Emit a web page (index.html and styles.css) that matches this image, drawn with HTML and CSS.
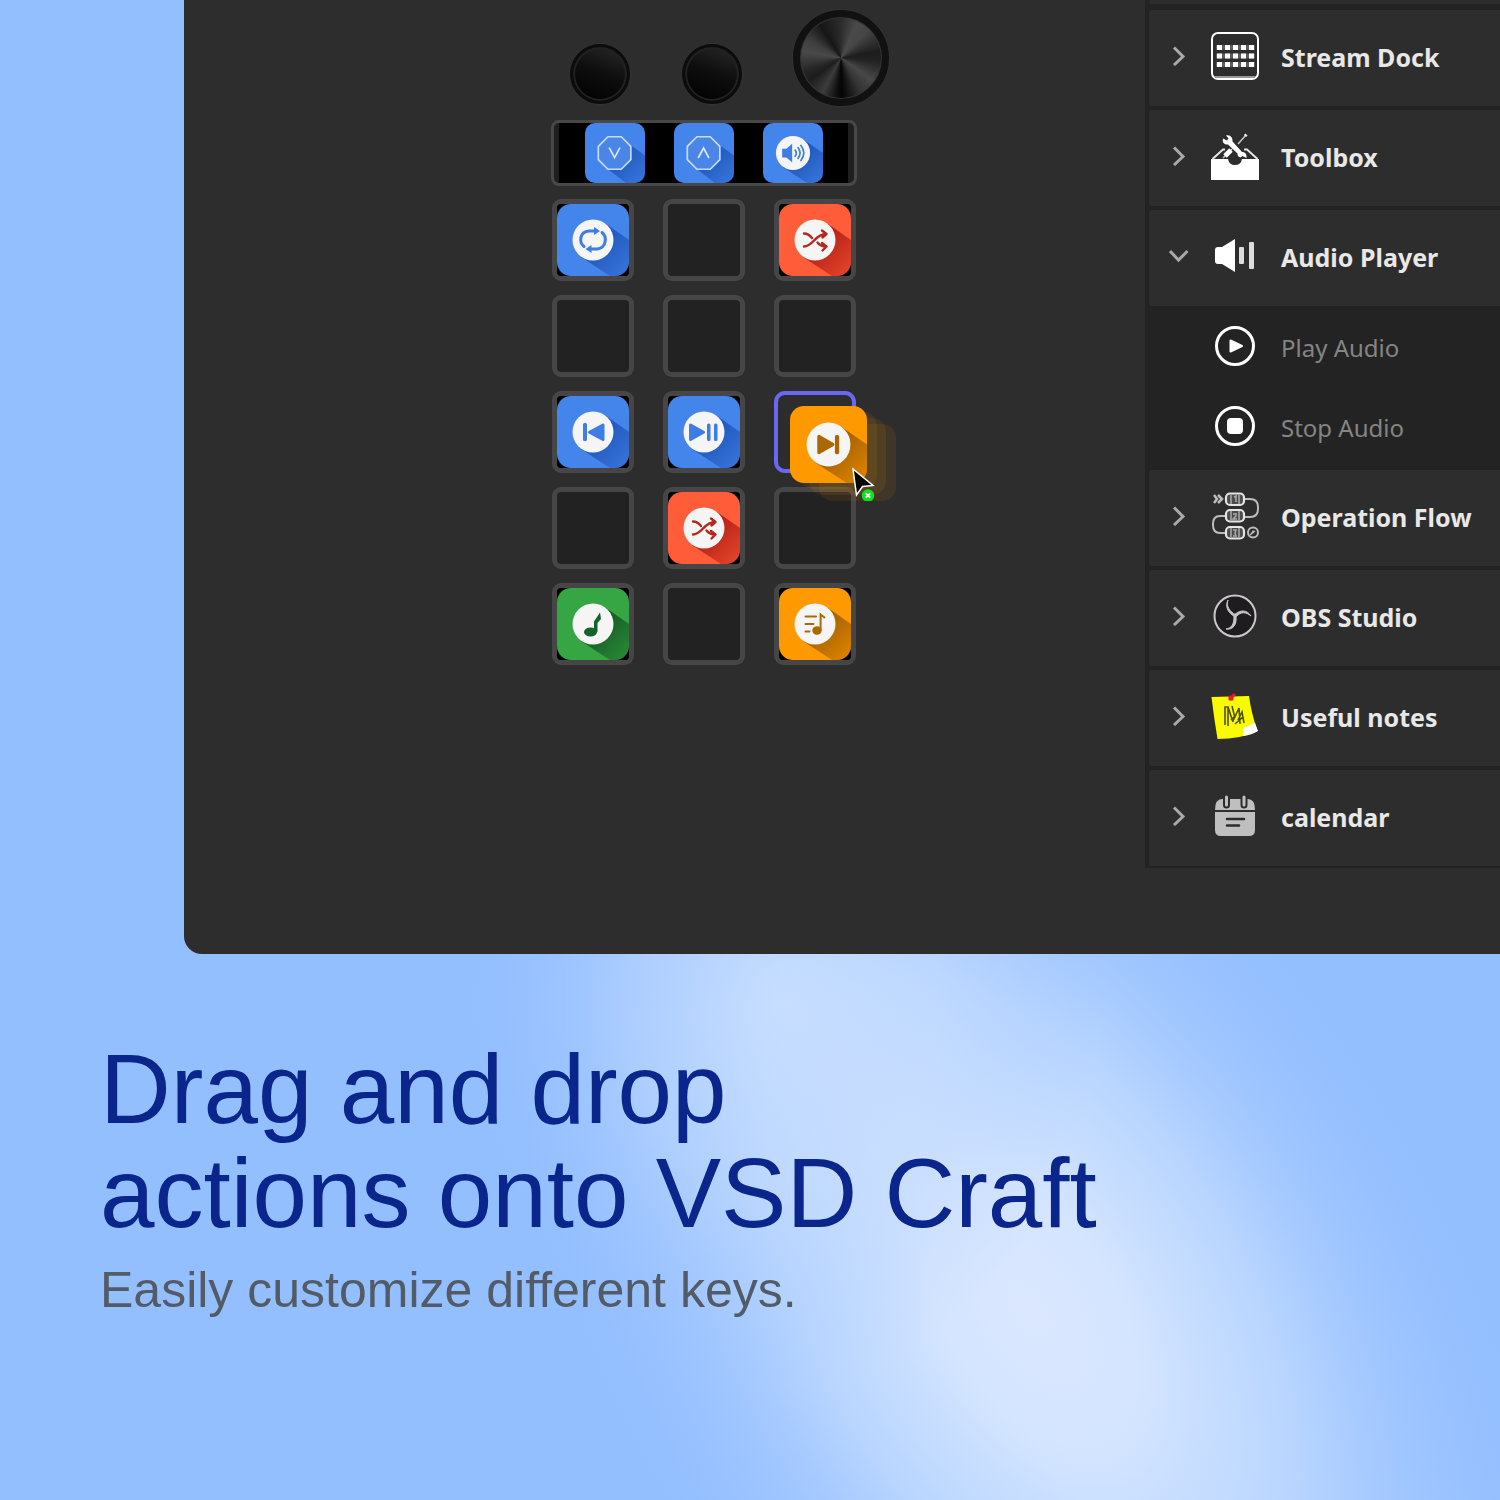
FILE: index.html
```html
<!DOCTYPE html>
<html lang="en">

<head>
    <meta charset="UTF-8">
    <meta name="viewport" content="width=device-width, initial-scale=1.0">
    <title>VSD Craft</title>
    <link rel="stylesheet" href="styles.css">
</head>

<body>
    <!-- soft light behind the caption -->
    <svg class="glow" viewBox="0 0 1500 1500" preserveAspectRatio="none" aria-hidden="true">
        <defs>
            <radialGradient id="glowMain">
                <stop offset="0" stop-color="#dbe7ff" />
                <stop offset="0.2" stop-color="#d8e7ff" stop-opacity="0.95" />
                <stop offset="0.5" stop-color="#cce1ff" stop-opacity="0.65" />
                <stop offset="0.75" stop-color="#b4d2ff" stop-opacity="0.3" />
                <stop offset="1" stop-color="#94bfff" stop-opacity="0" />
            </radialGradient>
            <radialGradient id="glowTop">
                <stop offset="0" stop-color="#cfe3ff" stop-opacity="0.7" />
                <stop offset="0.5" stop-color="#c4dbff" stop-opacity="0.35" />
                <stop offset="1" stop-color="#94bfff" stop-opacity="0" />
            </radialGradient>
        </defs>
        <ellipse cx="1030" cy="1310" rx="740" ry="420" fill="url(#glowMain)" transform="rotate(58 1030 1310)" />
        <ellipse cx="780" cy="1000" rx="320" ry="380" fill="url(#glowTop)" />
    </svg>

    <!-- shared shapes -->
    <svg class="defs" width="0" height="0" aria-hidden="true">
        <defs>
            <linearGradient id="fade" x1="0.35" y1="0.35" x2="0.95" y2="0.95">
                <stop offset="0" stop-color="#fff" />
                <stop offset="0.3" stop-color="#fff" stop-opacity="0.9" />
                <stop offset="1" stop-color="#fff" stop-opacity="0.35" />
            </linearGradient>
            <mask id="fadeMask" maskUnits="userSpaceOnUse" x="0" y="0" width="72" height="72">
                <rect width="72" height="72" fill="url(#fade)" />
            </mask>
            <symbol id="disc" viewBox="0 0 72 72">
                <path d="M49 20L72 36V72H53L24 53Z" fill="currentColor" mask="url(#fadeMask)" />
                <circle cx="36" cy="36" r="20.5" fill="#f5f5f5" />
            </symbol>
            <symbol id="octagon" viewBox="0 0 72 72">
                <path d="M54 26L72 39V72H49L27 55Z" fill="currentColor" mask="url(#fadeMask)" />
                <path class="face" d="M27.500 16.500H43.500L55 28V44L43.500 55.500H27.500L16 44V28Z" />
            </symbol>
            <symbol id="shuffle" viewBox="0 0 72 72">
                <g fill="none" stroke="currentColor" stroke-width="2.400" stroke-linecap="round" stroke-linejoin="round">
                    <path d="M25 29.500c4 0 6 2 8 4.500M25 42.500c9 0 11-12.500 22-12.500M38.500 38.500c2 2.500 4 4 8 4M43 26.500l4.500 3.500-4 3.500M43 39l4.500 3.500-4 4" />
                </g>
            </symbol>
            <symbol id="chevron" viewBox="0 0 20 20">
                <path d="M5 1.500L14 10.500L5 19" fill="none" stroke="#a9a9a9" stroke-width="3" />
            </symbol>
        </defs>
    </svg>

    <main class="app">
        <section class="workspace">
            <div class="device">
                <div class="knobs">
                    <button class="knob" aria-label="Knob 1"></button>
                    <button class="knob" aria-label="Knob 2"></button>
                    <button class="knob knob-large" aria-label="Knob 3"></button>
                </div>

                <div class="strip">
                    <button class="tile tile-strip blue" aria-label="Down">
                        <svg viewBox="0 0 72 72">
                            <use href="#octagon" />
                            <path class="line" d="M29 29.500L35.500 41.500L42 29.500" />
                        </svg>
                    </button>
                    <button class="tile tile-strip blue" aria-label="Up">
                        <svg viewBox="0 0 72 72">
                            <use href="#octagon" />
                            <path class="line" d="M29 42L35.500 30L42 42" />
                        </svg>
                    </button>
                    <button class="tile tile-strip blue" aria-label="Volume">
                        <svg viewBox="0 0 72 72">
                            <use href="#disc" />
                            <path class="glyph" d="M23 31H28L35 25V47L28 41.500H23Z" />
                            <path class="stroke" d="M38.500 32.500q3 3.500 0 7.500M42 29.500q5 6.500 0 13M45.500 27q7 9 0 18" />
                        </svg>
                    </button>
                </div>

                <div class="keys">
                    <button class="key" aria-label="Loop">
                        <span class="tile blue">
                            <svg viewBox="0 0 72 72">
                                <use href="#disc" />
                                <path class="stroke thick" d="M27 42.500c-5-4-5-14.500 5-15.500h6M45 28.500c5 4 5 15-5 16.500h-6" />
                                <path class="glyph" d="M37 23l6 4-6 4zM34.500 41l-6 4 6 4z" />
                            </svg>
                        </span>
                    </button>
                    <button class="key" aria-label="Empty key"></button>
                    <button class="key" aria-label="Shuffle">
                        <span class="tile red">
                            <svg viewBox="0 0 72 72">
                                <use href="#disc" />
                                <use class="icon" href="#shuffle" />
                            </svg>
                        </span>
                    </button>

                    <button class="key" aria-label="Empty key"></button>
                    <button class="key" aria-label="Empty key"></button>
                    <button class="key" aria-label="Empty key"></button>

                    <button class="key" aria-label="Previous">
                        <span class="tile blue">
                            <svg viewBox="0 0 72 72">
                                <use href="#disc" />
                                <path class="glyph round" d="M27.500 28.500V43.500M28.500 28.500V43.500M46 29V43.500L32.500 36.200Z" />
                            </svg>
                        </span>
                    </button>
                    <button class="key" aria-label="Play or pause">
                        <span class="tile blue">
                            <svg viewBox="0 0 72 72">
                                <use href="#disc" />
                                <path class="glyph round" d="M22.500 29V43.500L35.500 36.200ZM40.500 29V43.500M41 29V43.500M47.500 29V43.500M48 29V43.500" />
                            </svg>
                        </span>
                    </button>
                    <div class="key target">
                        <!-- tile being dragged, with its trail -->
                        <div class="drag">
                            <span class="ghost ghost-3"></span>
                            <span class="ghost ghost-2"></span>
                            <span class="ghost ghost-1"></span>
                            <button class="tile orange" aria-label="Next">
                                <svg viewBox="0 0 72 72">
                                    <use href="#disc" />
                                    <path class="glyph round" d="M27 28.500V43.500L40 36ZM43.500 28.500V43.500M44.500 28.500V43.500" />
                                </svg>
                            </button>
                            <svg class="cursor" viewBox="0 0 26 34">
                                <path d="M2 2L5.500 28L11.500 19.500L22 18.500Z" fill="#000" stroke="#fff" stroke-width="1.500" />
                                <circle cx="17" cy="28.500" r="6.300" fill="#0be41b" />
                                <path d="M14.800 26.300l4.400 4.400M19.200 26.300l-4.400 4.400" stroke="#fff" stroke-width="1.800" />
                            </svg>
                        </div>
                    </div>

                    <button class="key" aria-label="Empty key"></button>
                    <button class="key" aria-label="Shuffle">
                        <span class="tile red">
                            <svg viewBox="0 0 72 72">
                                <use href="#disc" />
                                <use class="icon" href="#shuffle" />
                            </svg>
                        </span>
                    </button>
                    <button class="key" aria-label="Empty key"></button>

                    <button class="key" aria-label="Music">
                        <span class="tile green">
                            <svg viewBox="0 0 72 72">
                                <use href="#disc" />
                                <ellipse class="glyph" cx="33.500" cy="44" rx="6.500" ry="4.600" />
                                <path class="glyph" d="M37 44V33.500L43 24.500L44 31L40.500 35V44Z" />
                            </svg>
                        </span>
                    </button>
                    <button class="key" aria-label="Empty key"></button>
                    <button class="key" aria-label="Playlist">
                        <span class="tile orange">
                            <svg viewBox="0 0 72 72">
                                <use href="#disc" />
                                <path class="stroke" d="M26.500 28.500H37M26.500 36H34.500M26.500 43.500H30.500" />
                                <ellipse class="glyph" cx="38" cy="42.500" rx="4.700" ry="4.200" />
                                <path class="stroke" d="M41.600 42V26.500L45.500 29.500" />
                            </svg>
                        </span>
                    </button>
                </div>
            </div>
        </section>

        <nav class="sidebar" aria-label="Actions">
            <div class="row row-cut"></div>
            <button class="row">
                <svg class="arrow"><use href="#chevron" /></svg>
                <svg class="row-icon" viewBox="0 0 48 48">
                    <rect x="1" y="1" width="46" height="46" rx="6" fill="none" stroke="#fff" stroke-width="2" />
                    <path d="M5 15.500H44M5 24H44M5 32.500H44" stroke="#5c5c5c" stroke-width="5" />
                    <path d="M6 15.500H43M6 24H43M6 32.500H43" stroke="#fff" stroke-width="5" stroke-dasharray="5 3" />
                    <path d="M4 45H44" stroke="#999" stroke-width="2" />
                </svg>
                <span>Stream Dock</span>
            </button>
            <button class="row">
                <svg class="arrow"><use href="#chevron" /></svg>
                <svg class="row-icon" viewBox="0 0 48 48">
                    <path d="M0 27H17q1 6 7 6t7-6H48V48H0Z" fill="#fff" />
                    <path d="M1.500 27L12 17.500H14M46.500 27L36 17.500H33" fill="none" stroke="#e6e6e6" stroke-width="2" />
                    <path d="M15 3.500c4-1.500 7 2 6.500 6L31 20c3 0 5 2 4.500 6l-4-2-2 1.500-2-1c-1-1-1-2-1-3L17 12.500c-4 0-6-2-5-6l4 2 1.500-2Z" fill="#fff" />
                    <path d="M35 3L27 12M21 17L12 26" stroke="#c6c6c6" stroke-width="1.500" />
                    <path d="M34 4l1.500-1.500" stroke="#eee" stroke-width="3" />
                    <path d="M20 18L14 24" stroke="#fff" stroke-width="5" />
                </svg>
                <span>Toolbox</span>
            </button>
            <button class="row" aria-expanded="true">
                <svg class="arrow arrow-open"><use href="#chevron" /></svg>
                <svg class="row-icon" viewBox="0 0 48 48">
                    <path d="M4 18q0-3 3-3h4L24 7V40L11 32H7q-3 0-3-3Z" fill="#fff" />
                    <rect x="28" y="15" width="5" height="17" rx="1" fill="#ddd" />
                    <rect x="38" y="10" width="5" height="27" rx="1" fill="#ddd" />
                </svg>
                <span>Audio Player</span>
            </button>
            <div class="sub">
                <button class="sub-row">
                    <svg class="row-icon" viewBox="0 0 48 48">
                        <circle cx="24" cy="24" r="18.500" fill="none" stroke="#fff" stroke-width="3" />
                        <path d="M19.500 18.500V29.500L31 24Z" fill="#fff" stroke="#fff" stroke-width="2" stroke-linejoin="round" />
                    </svg>
                    <span>Play Audio</span>
                </button>
                <button class="sub-row">
                    <svg class="row-icon" viewBox="0 0 48 48">
                        <circle cx="24" cy="24" r="18.500" fill="none" stroke="#fff" stroke-width="3" />
                        <rect x="16" y="16" width="16" height="16" rx="4" fill="#fff" />
                    </svg>
                    <span>Stop Audio</span>
                </button>
            </div>
            <button class="row">
                <svg class="arrow"><use href="#chevron" /></svg>
                <svg class="row-icon" viewBox="0 0 48 48">
                    <g fill="none" stroke="#bdbdbd" stroke-width="2">
                        <path d="M34 7h5q8 0 8 8v2q0 8-8 8H34M14 24H9q-7 0-7 8v1q0 8 7 8h5" />
                        <path d="M3 3l3 4-3 4M7 3l4 4-4 4" stroke-width="2.500" />
                        <circle cx="42" cy="40.500" r="5" />
                        <path d="M42 38.500v2l-2 1M39 43l5-4" stroke-width="1.500" />
                    </g>
                    <g fill="#4c4c4c" stroke="#e4e4e4" stroke-width="2.200">
                        <rect x="15" y="1.500" width="18" height="11.500" rx="4" />
                        <rect x="15" y="18" width="18" height="11.500" rx="4" />
                        <rect x="15" y="35" width="18" height="11.500" rx="4" />
                    </g>
                    <g fill="none" stroke="#aaa" stroke-width="1.500">
                        <path d="M20 3v9M28 3v9M20 19v9M28 19v9M20 36v9M28 36v9" />
                        <path d="M23 5l2-1v6M22 22h3v2l-3 3h4M22 38h3l-1 3 1 3h-3" />
                    </g>
                </svg>
                <span>Operation Flow</span>
            </button>
            <button class="row">
                <svg class="arrow"><use href="#chevron" /></svg>
                <svg class="row-icon" viewBox="0 0 48 48">
                    <circle cx="24" cy="24" r="20.500" fill="#1e1c1f" stroke="#c9c9c9" stroke-width="2" />
                    <g fill="#c4c4c4" stroke="#c4c4c4" stroke-width="1">
                        <path d="M17 8C14 14 16 20 24 25L25 23C18 19 15 14 17 8Z" />
                        <path d="M40 24C36 18 30 17 23 23L25 25C30 19 35 20 40 24Z" />
                        <path d="M15 37C22 38 26 33 25 24L23 24C23 32 21 36 15 37Z" />
                    </g>
                </svg>
                <span>OBS Studio</span>
            </button>
            <button class="row">
                <svg class="arrow"><use href="#chevron" /></svg>
                <svg class="row-icon" viewBox="0 0 48 48">
                    <path d="M0.500 5L38 4Q40 20 46.500 39Q30 47 6.500 47Q3 26 0.500 5Z" fill="#fbfb00" />
                    <path d="M32 36L44 31L47 39Q41 43 32 44Z" fill="#fff" />
                    <path d="M18 8L24 2M18 4l4 4" stroke="#e21b1b" stroke-width="3" />
                    <path d="M14 33V15h3v19M17 15l5 15M21 14l3 12M22 29l6-13 1 16M27 28l4-8 2 11M20 28l5-5M24 32l8-7" fill="none" stroke="#4f5200" stroke-width="1.600" />
                </svg>
                <span>Useful notes</span>
            </button>
            <button class="row">
                <svg class="arrow"><use href="#chevron" /></svg>
                <svg class="row-icon" viewBox="0 0 48 48">
                    <path d="M4 18q0-11 7-11H37q7 0 7 11Z" fill="#bfbfbf" />
                    <path d="M4 20H44V38q0 6-6 6H10q-6 0-6-6Z" fill="#bfbfbf" />
                    <path d="M15.500 5V13M33 5V13" stroke="#2d2d2d" stroke-width="7" stroke-linecap="round" />
                    <path d="M15.500 5V13M33 5V13" stroke="#bfbfbf" stroke-width="3" stroke-linecap="round" />
                    <path d="M16 27H33M16 33.500H28" stroke="#2d2d2d" stroke-width="2.500" stroke-linecap="round" />
                </svg>
                <span>calendar</span>
            </button>
        </nav>
    </main>

    <section class="caption">
        <h1>Drag and drop<br>actions onto VSD Craft</h1>
        <p>Easily customize different keys.</p>
    </section>
</body>

</html>
```

FILE: styles.css
```css
* {
    box-sizing: border-box;
}

body {
    position: relative;
    margin: 0;
    min-height: 100vh;
    background: #94bfff;
    font-family: "Liberation Sans", Arial, sans-serif;
}

button {
    margin: 0;
    padding: 0;
    border: none;
    background: none;
    font: inherit;
    color: inherit;
    text-align: left;
    cursor: pointer;
}

svg {
    display: block;
}

.glow {
    position: absolute;
    z-index: -1;
    inset: 0;
    width: 100%;
    height: 100%;
    overflow: hidden;
}

.defs {
    position: absolute;
}

.app {
    display: flex;
    align-items: flex-start;
    margin-left: 184px;
    padding-bottom: 86px;
    background: #2d2d2d;
    border-bottom-left-radius: 18px;
}

/* device */
.workspace {
    flex: 1;
    display: flex;
    justify-content: center;
    padding: 10px 0 0 111px;
}

.device {
    width: 338px;
}

.knobs {
    display: flex;
    justify-content: space-between;
    align-items: flex-end;
    padding-left: 19px;
}

.knob {
    width: 60px;
    height: 60px;
    margin-bottom: 2px;
    border-radius: 50%;
    border: 3px solid #0c0c0c;
    background: linear-gradient(200deg, #262626 5%, #0d0d0d 50%, #000 100%);
    box-shadow: inset 0 0 0 2px #222, 0 0 0 1px #333;
}

.knob-large {
    width: 96px;
    height: 96px;
    margin-bottom: 0;
    border: 7px solid #111;
    background: conic-gradient(#2c2c2c 0deg, #4a4a4a 25deg, #454545 45deg, #1d1d1d 80deg, #222 95deg, #484848 125deg, #333 150deg, #050505 178deg, #0a0a0a 184deg, #3c3c3c 208deg, #1c1c1c 235deg, #262626 250deg, #4a4a4a 280deg, #3d3d3d 300deg, #161616 328deg, #2c2c2c 360deg) padding-box;
    box-shadow: inset 0 0 0 1px #343434, 0 0 0 1px #333;
}

.strip {
    display: flex;
    justify-content: center;
    align-items: center;
    gap: 29px;
    width: 306px;
    height: 66px;
    margin-top: 14px;
    border: 3px solid #484848;
    border-radius: 8px;
    background: linear-gradient(90deg, #1f1f1f 5px, #000 5px, #000 294px, #1f1f1f 294px);
}

.keys {
    display: grid;
    grid-template-columns: repeat(3, 82px);
    justify-content: space-between;
    gap: 14px 0;
    width: 304px;
    margin: 13px 0 0 1px;
}

.key {
    height: 82px;
    border: 5px solid #464646;
    border-radius: 9px;
    background: #222;
}

.key .tile {
    display: block;
}

.key:has(> .tile) {
    background: #000;
}

.tile {
    width: 72px;
    height: 72px;
    border-radius: 14px;
    overflow: hidden;
}

.tile-strip {
    width: 60px;
    height: 60px;
    border-radius: 10px;
}

.tile svg {
    width: 100%;
    height: 100%;
}

.blue {
    background: #4485ec;
    color: #1c52b6;
    --icon: #3d7de4;
}

.red {
    background: #ff5c39;
    color: #ac1810;
    --icon: #b5261c;
}

.orange {
    background: #ff9900;
    color: #985a00;
    --icon: #ac6800;
}

.green {
    background: #35a643;
    color: #125220;
    --icon: #12632a;
}

.face {
    fill: #4a86e8;
    stroke: #c8dcfa;
    stroke-width: 2;
}

.line {
    fill: none;
    stroke: #dce8fc;
    stroke-width: 2;
}

.icon {
    color: var(--icon);
}

.glyph {
    fill: var(--icon);
}

.round {
    stroke: var(--icon);
    stroke-width: 3;
    stroke-linecap: round;
    stroke-linejoin: round;
}

.stroke {
    fill: none;
    stroke: var(--icon);
    stroke-width: 2;
    stroke-linecap: round;
}

.thick {
    stroke-width: 3;
}

/* drop target and dragged tile */
.target {
    position: relative;
    z-index: 1;
    border: 4px solid #6a67f2;
    border-radius: 11px;
    background: #2d2d2d;
}

.drag {
    position: absolute;
    left: 12px;
    top: 11px;
    width: 77px;
    height: 77px;
}

.drag .tile {
    position: relative;
    width: 77px;
    height: 77px;
}

.ghost {
    position: absolute;
    width: 77px;
    height: 77px;
    border-radius: 14px;
    background: rgba(255, 153, 0, 0.09);
}

.ghost-1 {
    left: 10px;
    top: 6px;
}

.ghost-2 {
    left: 19px;
    top: 12px;
}

.ghost-3 {
    left: 29px;
    top: 18px;
}

.cursor {
    position: absolute;
    left: 61px;
    top: 61px;
    width: 26px;
    height: 34px;
}

/* action list */
.sidebar {
    display: flex;
    flex-direction: column;
    gap: 4px;
    width: 355px;
    padding: 0 0 2px 4px;
    background: #232323;
    font-family: "Noto Sans", "Open Sans", sans-serif;
}

.row {
    display: flex;
    align-items: center;
    height: 96px;
    padding: 0 0 4px 20px;
    border-radius: 2px 0 0 2px;
    background: #2d2d2d;
    color: #e8e8e8;
    font-size: 25px;
    font-weight: 700;
    white-space: nowrap;
}

.row-cut {
    height: 4px;
    margin-bottom: 2px;
    padding: 0;
}

.arrow {
    width: 20px;
    height: 20px;
    margin-right: 22px;
}

.arrow-open {
    transform: rotate(90deg);
}

.row-icon {
    width: 48px;
    height: 48px;
    margin-right: 22px;
}

.row span,
.sub-row span {
    padding-top: 2px;
}

.sub {
    display: flex;
    flex-direction: column;
    margin-top: -4px;
}

.sub-row {
    display: flex;
    align-items: center;
    height: 80px;
    padding-left: 62px;
    color: #858585;
    font-size: 24px;
}

/* caption */
.caption {
    padding: 83px 100px 0;
}

h1 {
    margin: 0 0 15px;
    color: #0a258b;
    font-size: 98px;
    font-weight: 400;
    line-height: 104px;
}

.caption p {
    margin: 0;
    color: #535c66;
    font-size: 50px;
    line-height: 60px;
}
```
